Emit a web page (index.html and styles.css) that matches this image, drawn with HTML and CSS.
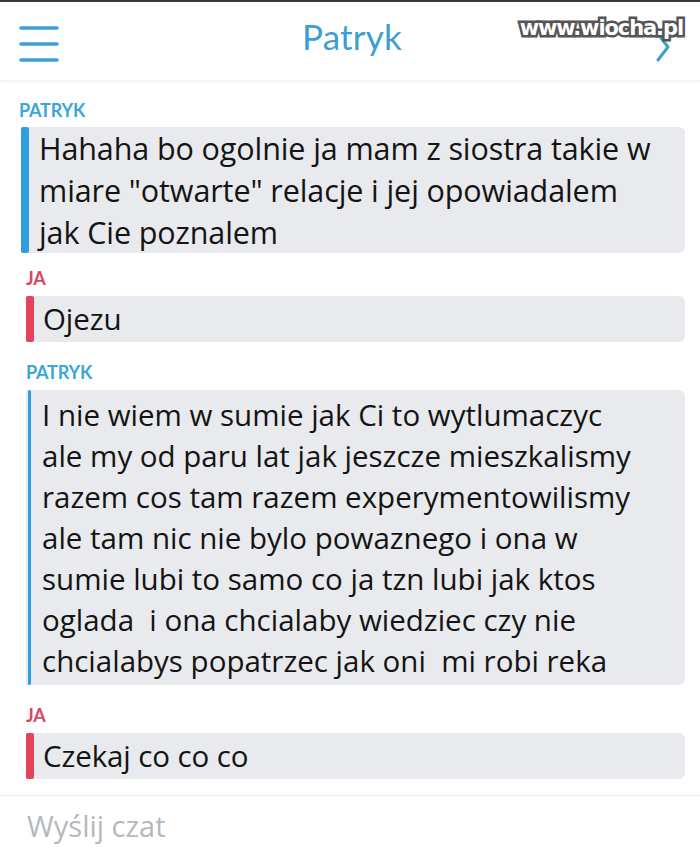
FILE: index.html
```html
<!DOCTYPE html>
<html lang="pl">
<head>
<meta charset="utf-8">
<title>Patryk</title>
<link rel="stylesheet" href="styles.css">
</head>
<body>
<div class="screen">
  <header class="header">
    <svg class="burger" width="40" height="38" viewBox="0 0 40 38">
      <g stroke="#3c9fd2" stroke-width="3.5" stroke-linecap="round">
        <line x1="2" y1="3" x2="38" y2="3"/>
        <line x1="2" y1="19" x2="38" y2="19"/>
        <line x1="2" y1="35" x2="38" y2="35"/>
      </g>
    </svg>
    <div class="title">Patryk</div>
    <svg class="chev" width="16" height="32" viewBox="0 0 16 32">
      <path d="M3 3 L13 16 L3 29" fill="none" stroke="#3c9fd2" stroke-width="3" stroke-linecap="round" stroke-linejoin="round"/>
    </svg>
    <div class="watermark">www.wiocha.pl</div>
  </header>

  <main class="chat">
    <section class="msg msg-first">
      <div class="who who-blue">PATRYK</div>
      <div class="bubble bubble-big"><span class="bar bar-blue bar-wide"></span><p class="text">Hahaha bo ogolnie ja mam z siostra takie w<br>miare "otwarte" relacje i jej opowiadalem<br>jak Cie poznalem</p></div>
    </section>

    <section class="msg msg-ja1">
      <div class="who who-red">JA</div>
      <div class="bubble bubble-one"><span class="bar bar-red bar-wide"></span><p class="text">Ojezu</p></div>
    </section>

    <section class="msg">
      <div class="who who-blue">PATRYK</div>
      <div class="bubble bubble-long"><span class="bar bar-blue bar-thin"></span><p class="text">I nie wiem w sumie jak Ci to wytlumaczyc<br>ale my od paru lat jak jeszcze mieszkalismy<br>razem cos tam razem experymentowilismy<br>ale tam nic nie bylo powaznego i ona w<br>sumie lubi to samo co ja tzn lubi jak ktos<br>oglada&nbsp; i ona chcialaby wiedziec czy nie<br>chcialabys popatrzec jak oni&nbsp; mi robi reka</p></div>
    </section>

    <section class="msg">
      <div class="who who-red">JA</div>
      <div class="bubble bubble-one"><span class="bar bar-red bar-wide"></span><p class="text">Czekaj co co co</p></div>
    </section>
  </main>

  <footer class="composer">Wyślij czat</footer>
</div>
</body>
</html>
```

FILE: styles.css
```css
html, body {
  margin: 0;
  padding: 0;
  background: #ffffff;
}

.screen {
  width: 700px;
  height: 867px;
  overflow: hidden;
  border-top: 2px solid #3a3a3a;
  box-sizing: border-box;
  font-family: "Open Sans", Lato, "Noto Sans", sans-serif;
  color: #141414;
}

.header {
  position: relative;
  height: 78px;
  display: flex;
  align-items: center;
  justify-content: center;
  border-bottom: 1px solid #f0f1f2;
  box-shadow: 0 2px 3px rgba(0, 0, 0, 0.03);
}

.burger {
  position: absolute;
  left: 19px;
  top: 23px;
}

.title {
  font-family: Lato, "Open Sans", sans-serif;
  font-size: 35px;
  color: #3c9fd2;
  margin-top: -10px;
  margin-left: 4px;
  letter-spacing: 0.2px;
}

.chev {
  position: absolute;
  right: 29px;
  top: 29px;
}

.watermark {
  position: absolute;
  right: 17px;
  top: 14px;
  font-family: "DejaVu Sans", sans-serif;
  font-weight: bold;
  font-size: 21px;
  letter-spacing: -1.1px;
  color: #ffffff;
  -webkit-text-stroke: 5px #555555;
  paint-order: stroke fill;
}

.chat {
  display: flex;
  flex-direction: column;
  padding: 0 15px 0 26px;
}

.msg {
  display: flex;
  flex-direction: column;
}

.msg-first {
  margin-left: -7px;
}

.who {
  font-family: Lato, "Open Sans", sans-serif;
  font-size: 18px;
  font-weight: bold;
  line-height: 20px;
  margin-top: 20px;
  margin-bottom: 8px;
  letter-spacing: -0.2px;
}

.msg-first .who {
  margin-top: 19px;
  margin-bottom: 7px;
}

.msg-ja1 .who {
  margin-top: 15px;
  margin-bottom: 8px;
}

.who-blue { color: #3aa6d9; }
.who-red { color: #d8475f; }

.bubble {
  display: flex;
  align-items: stretch;
  background: #e8eaed;
  border-radius: 0 6px 6px 0;
}

.bar {
  flex: none;
  border-radius: 2px;
}

.bar-wide { width: 8px; }
.bar-thin { width: 3px; margin-left: 2px; }
.bar-blue { background: #2f9fde; }
.bar-red { background: #e3435d; }

.text {
  margin: 0;
  padding-left: 9px;
  font-size: 29.5px;
  font-weight: 500;
  line-height: 46px;
  white-space: nowrap;
  letter-spacing: -0.1px;
}

.bubble-big {
  margin-left: 2px;
}

.bubble-big .text {
  font-size: 30.5px;
  line-height: 42px;
  padding-left: 10px;
}

.bubble-long .text {
  padding-top: 4px;
  padding-bottom: 4px;
  line-height: 41px;
  padding-left: 11px;
  letter-spacing: 0;
}

.composer {
  margin-top: 16px;
  border-top: 1px solid #eeeff0;
  box-shadow: 0 -2px 3px rgba(0, 0, 0, 0.02);
  padding: 10px 0 0 27px;
  font-size: 29px;
  color: #b5b9be;
  line-height: 40px;
}
```
